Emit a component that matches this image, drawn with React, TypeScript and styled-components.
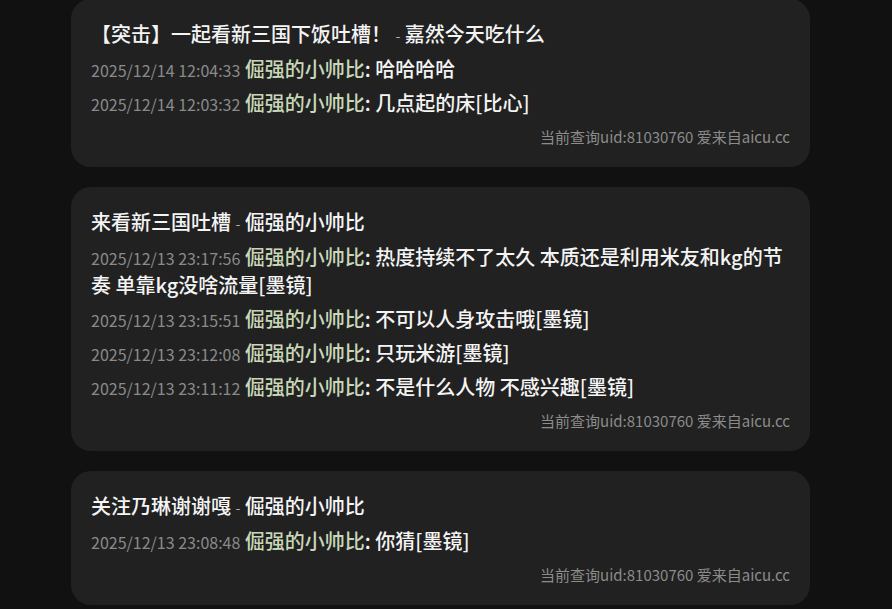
import React from "react";
import styled, { createGlobalStyle } from "styled-components";

const Global = createGlobalStyle`
  html, body { margin: 0; padding: 0; background: #111111; }
  body { font-family: "Noto Sans CJK SC", "Noto Sans", sans-serif; overflow: hidden; }
`;

const Page = styled.div`
  display: flex;
  flex-direction: column;
  gap: 20px;
  padding-left: 71px;
  margin-top: -1px;
`;

const Card = styled.section`
  width: 739px;
  box-sizing: border-box;
  background: #212121;
  border-radius: 20px;
  padding: 20px 20px 18px 20px;
  display: flex;
  flex-direction: column;
  gap: 6px;
`;

const Title = styled.div`
  color: #f4f4f4;
  font-size: 20px;
  font-weight: 500;
  line-height: 30px;
`;

const Sep = styled.span`
  color: #b0b0b0;
  font-size: 14px;
  font-weight: 400;
  line-height: 1;
  vertical-align: 1px;
`;

const Row = styled.div`
  color: #f4f4f4;
  font-size: 20px;
  font-weight: 500;
  line-height: 28px;
`;

const Time = styled.span`
  color: #8a8a8a;
  font-size: 16px;
  font-weight: 400;
  line-height: 1;
`;

const User = styled.span`
  color: #c8d7b8;
`;

const Footer = styled.div`
  margin-top: 2px;
  text-align: right;
  color: #8c8c8c;
  font-size: 15px;
  line-height: 24px;
`;

type Comment = { time: string; text: string };
type Post = { title: string; author: string; comments: Comment[] };

const posts: Post[] = [
  {
    title: "【突击】一起看新三国下饭吐槽！",
    author: "嘉然今天吃什么",
    comments: [
      { time: "2025/12/14 12:04:33", text: "哈哈哈哈" },
      { time: "2025/12/14 12:03:32", text: "几点起的床[比心]" },
    ],
  },
  {
    title: "来看新三国吐槽",
    author: "倔强的小帅比",
    comments: [
      { time: "2025/12/13 23:17:56", text: "热度持续不了太久 本质还是利用米友和kg的节奏 单靠kg没啥流量[墨镜]" },
      { time: "2025/12/13 23:15:51", text: "不可以人身攻击哦[墨镜]" },
      { time: "2025/12/13 23:12:08", text: "只玩米游[墨镜]" },
      { time: "2025/12/13 23:11:12", text: "不是什么人物 不感兴趣[墨镜]" },
    ],
  },
  {
    title: "关注乃琳谢谢嘎",
    author: "倔强的小帅比",
    comments: [{ time: "2025/12/13 23:08:48", text: "你猜[墨镜]" }],
  },
];

export default function App() {
  return (
    <>
      <Global />
      <Page>
        {posts.map((p, i) => (
          <Card key={i}>
            <Title>
              {p.title} <Sep>-</Sep> {p.author}
            </Title>
            {p.comments.map((c, j) => (
              <Row key={j}>
                <Time>{c.time}</Time> <User>倔强的小帅比</User>: {c.text}
              </Row>
            ))}
            <Footer>当前查询uid:81030760 爱来自aicu.cc</Footer>
          </Card>
        ))}
      </Page>
    </>
  );
}
